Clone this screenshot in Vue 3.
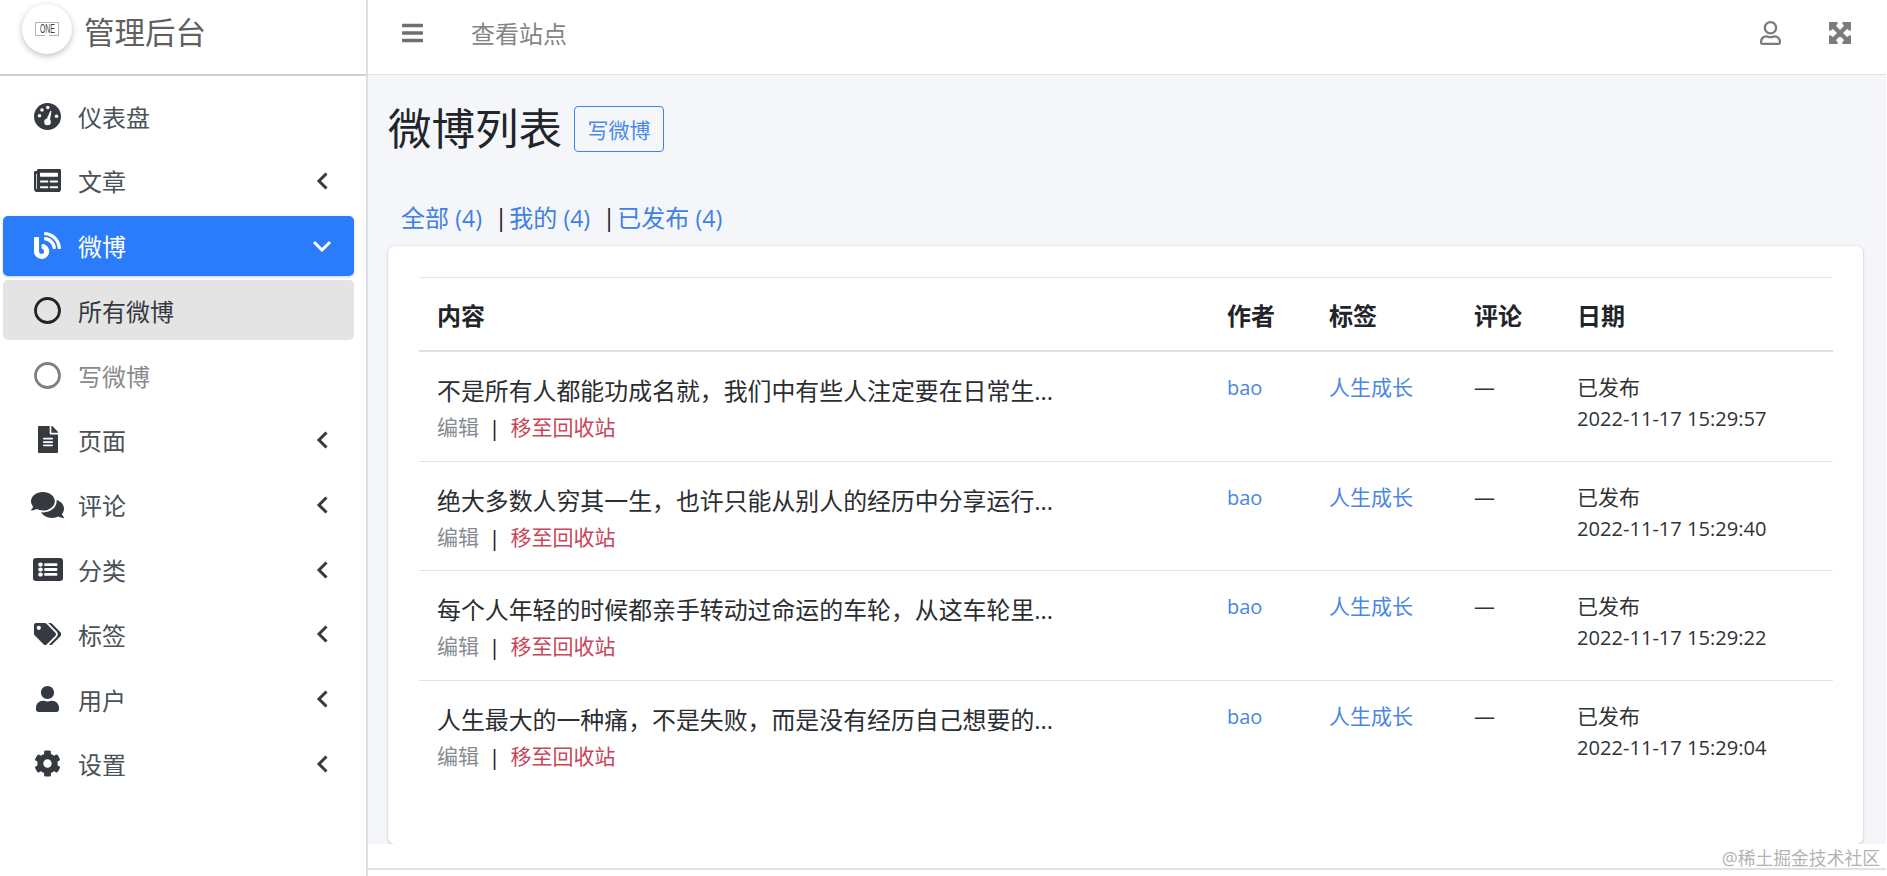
<script setup>
const nav = [
  { label: '仪表盘', icon: 'gauge' },
  { label: '文章', icon: 'news', arrow: 'left' },
  { label: '微博', icon: 'blog', arrow: 'down', tone: 'primary' },
  { label: '所有微博', icon: 'ring', tone: 'current' },
  { label: '写微博', icon: 'ring', tone: 'muted' },
  { label: '页面', icon: 'file', arrow: 'left' },
  { label: '评论', icon: 'comments', arrow: 'left' },
  { label: '分类', icon: 'list', arrow: 'left' },
  { label: '标签', icon: 'tags', arrow: 'left' },
  { label: '用户', icon: 'user', arrow: 'left' },
  { label: '设置', icon: 'cog', arrow: 'left' }
]

const icons = {
  news: { w: 27, h: 23, box: '0 64 576 384', d: 'M552 64H88c-13.255 0-24 10.745-24 24v8H24c-13.255 0-24 10.745-24 24v272c0 30.928 25.072 56 56 56h472c26.51 0 48-21.49 48-48V88c0-13.255-10.745-24-24-24zM56 400a8 8 0 0 1-8-8V144h16v248a8 8 0 0 1-8 8zm236-16H140c-6.627 0-12-5.373-12-12v-8c0-6.627 5.373-12 12-12h152c6.627 0 12 5.373 12 12v8c0 6.627-5.373 12-12 12zm208 0H348c-6.627 0-12-5.373-12-12v-8c0-6.627 5.373-12 12-12h152c6.627 0 12 5.373 12 12v8c0 6.627-5.373 12-12 12zm-208-96H140c-6.627 0-12-5.373-12-12v-8c0-6.627 5.373-12 12-12h152c6.627 0 12 5.373 12 12v8c0 6.627-5.373 12-12 12zm208 0H348c-6.627 0-12-5.373-12-12v-8c0-6.627 5.373-12 12-12h152c6.627 0 12 5.373 12 12v8c0 6.627-5.373 12-12 12zm0-96H140c-6.627 0-12-5.373-12-12v-40c0-6.627 5.373-12 12-12h360c6.627 0 12 5.373 12 12v40c0 6.627-5.373 12-12 12z' },
  blog: { w: 27, h: 27, box: '0 0 512 512', d: 'M172.2 226.8c-14.6-2.9-28.2 8.9-28.2 23.8V301c0 10.2 7.1 18.4 16.7 22 18.2 6.8 31.3 24.4 31.3 45 0 26.5-21.5 48-48 48s-48-21.5-48-48V120c0-13.3-10.7-24-24-24H24c-13.3 0-24 10.7-24 24v248c0 89.5 82.1 160.2 175 140.7 54.4-11.4 98.3-55.4 109.7-109.7 17.4-82.9-37-157.2-112.5-172.2zM209 0c-9.2-.5-17 6.8-17 16v31.6c0 8.5 6.6 15.5 15 15.9 129.4 7 233.1 112 240.9 241.5.5 8.4 7.5 15 15.9 15h32.1c9.2 0 16.5-7.8 16-17C503.4 139.8 372.2 8.6 209 0zm.3 96c-9.3-.7-17.3 6.7-17.3 16.1v32.1c0 8.4 6.5 15.3 14.8 15.9 76.8 6.3 138 68.2 144.9 145.2.8 8.3 7.6 14.7 15.9 14.7h32.2c9.3 0 16.8-8 16.1-17.3-8.4-110.1-96.5-198.2-206.6-206.7z' },
  file: { w: 20, h: 27, box: '0 0 384 512', d: 'M224 136V0H24C10.7 0 0 10.7 0 24v464c0 13.3 10.7 24 24 24h336c13.3 0 24-10.7 24-24V160H248c-13.2 0-24-10.8-24-24zm64 236c0 6.6-5.4 12-12 12H108c-6.6 0-12-5.4-12-12v-8c0-6.6 5.4-12 12-12h168c6.6 0 12 5.4 12 12v8zm0-64c0 6.6-5.4 12-12 12H108c-6.6 0-12-5.4-12-12v-8c0-6.6 5.4-12 12-12h168c6.6 0 12 5.4 12 12v8zm0-72v8c0 6.6-5.4 12-12 12H108c-6.6 0-12-5.4-12-12v-8c0-6.6 5.4-12 12-12h168c6.6 0 12 5.4 12 12zm96-114.1v6.1H256V0h6.1c6.4 0 12.5 2.5 17 7l97.9 98c4.5 4.5 7 10.6 7 16.9z' },
  comments: { w: 33, h: 26, box: '0 32 576 448', d: 'M416 192c0-88.4-93.1-160-208-160S0 103.6 0 192c0 34.3 14.1 65.9 38 92-13.4 30.2-35.5 54.2-35.8 54.5-2.2 2.3-2.8 5.7-1.5 8.7S4.8 352 8 352c36.6 0 66.9-12.3 88.7-25 32.2 15.7 70.3 25 111.3 25 114.9 0 208-71.6 208-160zm122 220c23.9-26 38-57.7 38-92 0-66.9-53.5-124.2-129.3-148.1.9 6.6 1.3 13.3 1.3 20.1 0 105.9-107.7 192-240 192-10.8 0-21.3-.8-31.7-1.9C207.8 439.6 281.8 480 368 480c41 0 79.1-9.2 111.3-25 21.8 12.7 52.1 25 88.7 25 3.2 0 6.1-1.9 7.3-4.8 1.3-2.9.7-6.3-1.5-8.7-.3-.3-22.4-24.2-35.8-54.5z' },
  list: { w: 30, h: 23, box: '0 32 512 448', d: 'M464 480H48c-26.51 0-48-21.49-48-48V80c0-26.51 21.49-48 48-48h416c26.51 0 48 21.49 48 48v352c0 26.51-21.49 48-48 48zM128 120c-22.091 0-40 17.909-40 40s17.909 40 40 40 40-17.909 40-40-17.909-40-40-40zm0 96c-22.091 0-40 17.909-40 40s17.909 40 40 40 40-17.909 40-40-17.909-40-40-40zm0 96c-22.091 0-40 17.909-40 40s17.909 40 40 40 40-17.909 40-40-17.909-40-40-40zm288-136v-32c0-6.627-5.373-12-12-12H204c-6.627 0-12 5.373-12 12v32c0 6.627 5.373 12 12 12h200c6.627 0 12-5.373 12-12zm0 96v-32c0-6.627-5.373-12-12-12H204c-6.627 0-12 5.373-12 12v32c0 6.627 5.373 12 12 12h200c6.627 0 12-5.373 12-12zm0 96v-32c0-6.627-5.373-12-12-12H204c-6.627 0-12 5.373-12 12v32c0 6.627 5.373 12 12 12h200c6.627 0 12-5.373 12-12z' },
  tags: { w: 27.5, h: 22, box: '0 0 640 512', d: 'M497.941 225.941L286.059 14.059A48 48 0 0 0 252.118 0H48C21.49 0 0 21.49 0 48v204.118a48 48 0 0 0 14.059 33.941l211.882 211.882c18.744 18.745 49.136 18.746 67.882 0l204.118-204.118c18.745-18.745 18.745-49.137 0-67.882zM112 160c-26.51 0-48-21.49-48-48s21.49-48 48-48 48 21.49 48 48-21.49 48-48 48zm513.941 133.823L421.823 497.941c-18.745 18.745-49.137 18.745-67.882 0l-.36-.36L527.64 323.522c16.999-16.999 26.36-39.6 26.36-63.64s-9.362-46.641-26.36-63.64L331.397 0h48.721a48 48 0 0 1 33.941 14.059l211.882 211.882c18.745 18.745 18.745 49.137 0 67.882z' },
  user: { w: 23, h: 26, box: '0 0 448 512', d: 'M224 256c70.7 0 128-57.3 128-128S294.7 0 224 0 96 57.3 96 128s57.3 128 128 128zm89.6 32h-16.7c-22.2 10.2-46.9 16-72.9 16s-50.6-5.8-72.9-16h-16.7C60.2 288 0 348.2 0 422.4V464c0 26.5 21.5 48 48 48h352c26.5 0 48-21.5 48-48v-41.6c0-74.2-60.2-134.4-134.4-134.4z' },
  cog: { w: 27, h: 27, box: '0 0 512 512', d: 'M487.4 315.7l-42.6-24.6c4.3-23.2 4.3-47 0-70.2l42.6-24.6c4.9-2.8 7.1-8.6 5.5-14-11.1-35.6-30-67.8-54.7-94.6-3.8-4.1-10-5.1-14.8-2.3L380.8 110c-17.9-15.4-38.5-27.3-60.8-35.1V25.8c0-5.6-3.9-10.5-9.4-11.7-36.7-8.2-74.3-7.8-109.2 0-5.5 1.2-9.4 6.1-9.4 11.7V75c-22.2 7.9-42.8 19.8-60.8 35.1L88.7 85.5c-4.9-2.8-11-1.9-14.8 2.3-24.7 26.7-43.6 58.9-54.7 94.6-1.7 5.4.6 11.2 5.5 14L67.3 221c-4.3 23.2-4.3 47 0 70.2l-42.6 24.6c-4.9 2.8-7.1 8.6-5.5 14 11.1 35.6 30 67.8 54.7 94.6 3.8 4.1 10 5.1 14.8 2.3l42.6-24.6c17.9 15.4 38.5 27.3 60.8 35.1v49.2c0 5.6 3.9 10.5 9.4 11.7 36.7 8.2 74.3 7.8 109.2 0 5.5-1.2 9.4-6.1 9.4-11.7v-49.2c22.2-7.9 42.8-19.8 60.8-35.1l42.6 24.6c4.9 2.8 11 1.9 14.8-2.3 24.7-26.7 43.6-58.9 54.7-94.6 1.5-5.5-.7-11.3-5.6-14.1zM256 336c-44.1 0-80-35.9-80-80s35.9-80 80-80 80 35.9 80 80-35.9 80-80 80z' }
}

const rows = [
  { text: '不是所有人都能功成名就，我们中有些人注定要在日常生...', date: '2022-11-17 15:29:57' },
  { text: '绝大多数人穷其一生，也许只能从别人的经历中分享运行...', date: '2022-11-17 15:29:40' },
  { text: '每个人年轻的时候都亲手转动过命运的车轮，从这车轮里...', date: '2022-11-17 15:29:22' },
  { text: '人生最大的一种痛，不是失败，而是没有经历自己想要的...', date: '2022-11-17 15:29:04' }
]

const filters = ['全部', '我的', '已发布']
</script>

<template>
  <div class="app">
    <aside class="sidebar">
      <div class="brand">
        <span class="logo">
          <span class="logo-mark"><span class="logo-text">ONE</span></span>
        </span>
        <span class="brand-name">管理后台</span>
      </div>
      <nav class="nav">
        <a v-for="item in nav" :key="item.label" class="nav-item" :class="item.tone">
          <span class="nav-icon">
            <svg v-if="item.icon === 'gauge'" viewBox="0 0 26 26" width="27" height="27">
              <circle cx="13" cy="13" r="13" fill="currentColor" />
              <circle cx="7.700" cy="6.700" r="1.700" fill="#fff" />
              <circle cx="13.300" cy="4.300" r="1.700" fill="#fff" />
              <circle cx="5.300" cy="12.300" r="1.700" fill="#fff" />
              <circle cx="21.700" cy="12.700" r="1.700" fill="#fff" />
              <circle cx="13" cy="18.300" r="3.200" fill="#fff" />
              <path d="M11.200 17.500 15.800 7.500l1 .4L15 18.800z" fill="#fff" />
            </svg>
            <svg v-else-if="item.icon === 'ring'" viewBox="0 0 27 27" width="27" height="27">
              <circle cx="13.500" cy="13.500" r="12" fill="none" stroke="currentColor" stroke-width="2.800" />
            </svg>
            <svg
              v-else
              class="fa"
              :viewBox="icons[item.icon].box"
              :width="icons[item.icon].w"
              :height="icons[item.icon].h"
              preserveAspectRatio="none"
              fill="currentColor"
            >
              <path :d="icons[item.icon].d" />
            </svg>
          </span>
          <span class="nav-label">{{ item.label }}</span>
          <svg v-if="item.arrow === 'left'" class="chev" viewBox="0 0 12 18" width="12" height="18">
            <path d="M10.500 1.500 3 9l7.500 7.500" fill="none" stroke="currentColor" stroke-width="3" />
          </svg>
          <svg v-if="item.arrow === 'down'" class="chev down" viewBox="0 0 20 12" width="20" height="12">
            <path d="M2 2l8 8 8-8" fill="none" stroke="currentColor" stroke-width="3" />
          </svg>
        </a>
      </nav>
    </aside>

    <div class="main">
      <header class="topbar">
        <svg class="bars" viewBox="0 0 448 512" width="21" height="24" fill="currentColor">
          <path d="M16 132h416c8.837 0 16-7.163 16-16V76c0-8.837-7.163-16-16-16H16C7.163 60 0 67.163 0 76v40c0 8.837 7.163 16 16 16zm0 160h416c8.837 0 16-7.163 16-16v-40c0-8.837-7.163-16-16-16H16c-8.837 0-16 7.163-16 16v40c0 8.837 7.163 16 16 16zm0 160h416c8.837 0 16-7.163 16-16v-40c0-8.837-7.163-16-16-16H16c-8.837 0-16 7.163-16 16v40c0 8.837 7.163 16 16 16z" />
        </svg>
        <span class="site">查看站点</span>
        <span class="spacer"></span>
        <svg class="t-user" viewBox="0 0 448 512" width="21" height="24" fill="currentColor">
          <path d="M313.6 304c-28.700 0-42.500 16-89.600 16-47.100 0-60.800-16-89.600-16C60.200 304 0 364.200 0 438.400V464c0 26.500 21.500 48 48 48h352c26.500 0 48-21.500 48-48v-25.600c0-74.200-60.200-134.400-134.400-134.400zM400 464H48v-25.600c0-47.600 38.800-86.400 86.400-86.400 14.600 0 38.300 16 89.600 16 51.700 0 74.900-16 89.600-16 47.600 0 86.400 38.800 86.400 86.400V464zM224 288c79.500 0 144-64.500 144-144S303.500 0 224 0 80 64.500 80 144s64.500 144 144 144zm0-240c52.900 0 96 43.100 96 96s-43.100 96-96 96-96-43.100-96-96 43.100-96 96-96z" />
        </svg>
        <svg class="t-expand" viewBox="0 32 448 448" width="22" height="22" fill="currentColor" stroke="currentColor" stroke-width="34">
          <path d="M448 344v112a23.940 23.940 0 0 1-24 24H312c-21.390 0-32.090-25.900-17-41l36.200-36.200L224 295.600 116.770 402.900 153 439c15.090 15.100 4.390 41-17 41H24a23.940 23.940 0 0 1-24-24V344c0-21.400 25.890-32.100 41-17l36.190 36.200L184.460 256 77.180 148.700 41 185c-15.100 15.100-41 4.400-41-17V56a23.940 23.940 0 0 1 24-24h112c21.390 0 32.090 25.900 17 41l-36.200 36.200L224 216.400l107.230-107.300L295 73c-15.090-15.100-4.390-41 17-41h112a23.940 23.940 0 0 1 24 24v112c0 21.400-25.890 32.100-41 17l-36.190-36.200L263.540 256l107.280 107.300L407 327.100c15.100-15.200 41-4.500 41 16.900z" />
        </svg>
      </header>

      <main class="content">
        <div class="title-row">
          <h1 class="title">微博列表</h1>
          <a class="write-btn">写微博</a>
        </div>
        <div class="filters">
          <template v-for="(f, i) in filters" :key="f">
            <span v-if="i" class="sep">|</span>
            <a class="filter">{{ f }} <span class="num">(4)</span></a>
          </template>
        </div>
        <section class="card">
          <table class="table">
            <colgroup>
              <col class="c1" /><col class="c2" /><col class="c3" /><col class="c4" /><col class="c5" />
            </colgroup>
            <thead>
              <tr>
                <th>内容</th><th>作者</th><th>标签</th><th>评论</th><th>日期</th>
              </tr>
            </thead>
            <tbody>
              <tr v-for="r in rows" :key="r.date">
                <td>
                  <div class="post">{{ r.text }}</div>
                  <div class="actions">
                    <a class="edit">编辑</a>
                    <span class="bar">|</span>
                    <a class="trash">移至回收站</a>
                  </div>
                </td>
                <td><a class="link latin">bao</a></td>
                <td><a class="link">人生成长</a></td>
                <td class="dash">—</td>
                <td>
                  <div class="status">已发布</div>
                  <div class="date">{{ r.date }}</div>
                </td>
              </tr>
            </tbody>
          </table>
        </section>
      </main>

      <footer class="footer"></footer>
    </div>
    <div class="watermark">@稀土掘金技术社区</div>
  </div>
</template>

<style>
html, body { margin: 0; padding: 0; background: #fff; }
</style>

<style scoped>
.app {
  position: relative;
  display: flex;
  width: 1887px;
  height: 876px;
  overflow: hidden;
  box-sizing: border-box;
  padding-right: 1px;
  background: #fff;
  font-family: "Open Sans", "Noto Sans CJK SC", sans-serif;
  color: #212529;
}
.sidebar {
  flex: none;
  width: 368px;
  box-sizing: border-box;
  border-right: 2px solid #dcdfe3;
  background: #fff;
}
.brand {
  height: 76px;
  box-sizing: border-box;
  display: flex;
  align-items: center;
  gap: 12px;
  padding: 0 0 4px 22px;
  border-bottom: 2px solid #cfcfcf;
}
.logo {
  width: 50px;
  height: 50px;
  margin-top: -12px;
  border-radius: 50%;
  display: flex;
  align-items: center;
  justify-content: center;
  background: #fff;
  box-shadow: 0 2px 6px rgba(0, 0, 0, .25);
}
.logo-mark {
  position: relative;
  width: 24px;
  height: 14px;
  box-sizing: border-box;
  border: 1px solid #b4b4b4;
  display: flex;
  align-items: center;
  justify-content: center;
}
.logo-mark::after {
  content: "";
  position: absolute;
  left: 9px;
  bottom: -1px;
  width: 4px;
  height: 1px;
  background: #fff;
}
.logo-text {
  font-family: "Liberation Sans", sans-serif;
  font-size: 9.500px;
  line-height: 12px;
  color: #3c3c3c;
  transform: scale(.72, 1.25);
}
.brand-name {
  font-size: 30.500px;
  color: #5f5f5f;
  line-height: 1;
  margin-top: -5px;
}
.nav {
  padding: 10px 12px 0 3px;
  display: flex;
  flex-direction: column;
  gap: 4.800px;
}
.nav-item {
  position: relative;
  display: flex;
  align-items: center;
  height: 60px;
  border-radius: 5px;
  padding-left: 27px;
  font-size: 24px;
  color: #4a5157;
}
.nav-icon {
  width: 35px;
  height: 27px;
  display: flex;
  align-items: center;
  justify-content: center;
  color: #343a40;
  flex: none;
}
.nav-label {
  margin-left: 13px;
  margin-top: 3px;
  line-height: 1;
}
.fa { display: block; }
.chev {
  position: absolute;
  right: 26px;
  top: 21px;
  color: #343a40;
}
.chev.down { right: 22px; top: 24px; color: #fff; }
.nav-item.primary { background: #2a7cfa; color: #fff; box-shadow: 0 1px 3px rgba(0, 0, 0, .2); }
.nav-item.primary .nav-icon { color: #fff; }
.nav-item.current { background: #e4e4e4; color: #343a40; }
.nav-item.current .nav-icon { color: #212529; }
.nav-item.muted { color: #8a8a8a; }
.nav-item.muted .nav-icon { color: #808080; }

.main {
  flex: 1;
  min-width: 0;
  display: flex;
  flex-direction: column;
}
.topbar {
  flex: none;
  height: 75px;
  box-sizing: border-box;
  display: flex;
  align-items: center;
  padding: 0 35px 9px 34px;
  border-bottom: 1.500px solid #dee2e6;
  color: #7c7c7c;
}
.bars { color: #6f6f6f; }
.site {
  margin-left: 48px;
  font-size: 24px;
  color: #858585;
  margin-top: -1px;
}
.spacer { flex: 1; }
.t-expand { margin-left: 48px; }

.content {
  flex: 1;
  min-height: 0;
  display: flex;
  flex-direction: column;
  padding: 23.500px 23px 0 20px;
  background: #f4f6f9;
}
.title-row {
  flex: none;
  display: flex;
  align-items: center;
  gap: 12px;
  height: 60px;
}
.title {
  margin: 0;
  font-size: 43.500px;
  font-weight: 400;
  line-height: 60px;
  color: #212529;
}
.write-btn {
  display: flex;
  align-items: center;
  justify-content: center;
  width: 90px;
  height: 46px;
  box-sizing: border-box;
  border: 1.500px solid #3f82e2;
  border-radius: 4px;
  font-size: 21px;
  color: #4a8ae6;
}
.filters {
  flex: none;
  display: flex;
  align-items: center;
  height: 36px;
  margin: 40px 0 11.500px;
  padding-left: 13px;
  font-size: 24px;
  color: #3f80e5;
}
.filter { white-space: pre; }
.num { font-size: 23px; }
.sep {
  margin: 0 1.500px 0 12.500px;
  color: #222;
  font-size: 24px;
}
.card {
  flex: 1;
  min-height: 0;
  box-sizing: border-box;
  padding: 31px 30px 0 31px;
  background: #fff;
  border-radius: 6px;
  box-shadow: 0 0 1px rgba(0, 0, 0, .2), 0 1px 3px rgba(0, 0, 0, .18);
}
.table {
  width: 1414px;
  table-layout: fixed;
  border-collapse: separate;
  border-spacing: 0;
}
.c1 { width: 790px; }
.c2 { width: 102px; }
.c3 { width: 145px; }
.c4 { width: 103px; }
.c5 { width: 274px; }
th {
  height: 75px;
  box-sizing: border-box;
  padding: 0 0 0 18px;
  text-align: left;
  font-size: 24px;
  font-weight: 700;
  color: #212529;
  border-top: 1.500px solid #e4e6e9;
  border-bottom: 2.500px solid #dee0e2;
}
td {
  height: 109.500px;
  box-sizing: border-box;
  padding: 19px 0 0 18px;
  vertical-align: top;
  border-bottom: 1.500px solid #e0e2e4;
  font-size: 21px;
  line-height: 32px;
}
tbody tr:last-child td { border-bottom: 0; }
.post {
  font-size: 23.900px;
  line-height: 37px;
  margin-top: 1px;
  white-space: nowrap;
  color: #2a2e32;
}
.actions {
  display: flex;
  line-height: 37px;
  font-size: 21px;
}
.edit { color: #868c92; }
.bar { margin: 0 10px 0 9.500px; color: #222; font-size: 22px; }
.trash { color: #c8465a; }
.link { color: #4a86e2; }
.latin { font-size: 20px; }
.dash { color: #333; }
.date {
  font-size: 20.100px;
  color: #2f3337;
  white-space: nowrap;
}
.status { color: #2f3337; }

.footer {
  flex: none;
  height: 32px;
  box-sizing: border-box;
  background: #fff;
  position: relative;
  padding-top: 24px;
}
.footer::after {
  content: "";
  display: block;
  height: 1.500px;
  background: #dee2e6;
}
.watermark {
  position: absolute;
  right: 1px;
  bottom: 8px;
  padding: 5px 6px 0 4px;
  height: 19px;
  line-height: 19px;
  background: rgba(255, 255, 255, .8);
  font-size: 17.800px;
  color: #b3b3b3;
}
</style>
